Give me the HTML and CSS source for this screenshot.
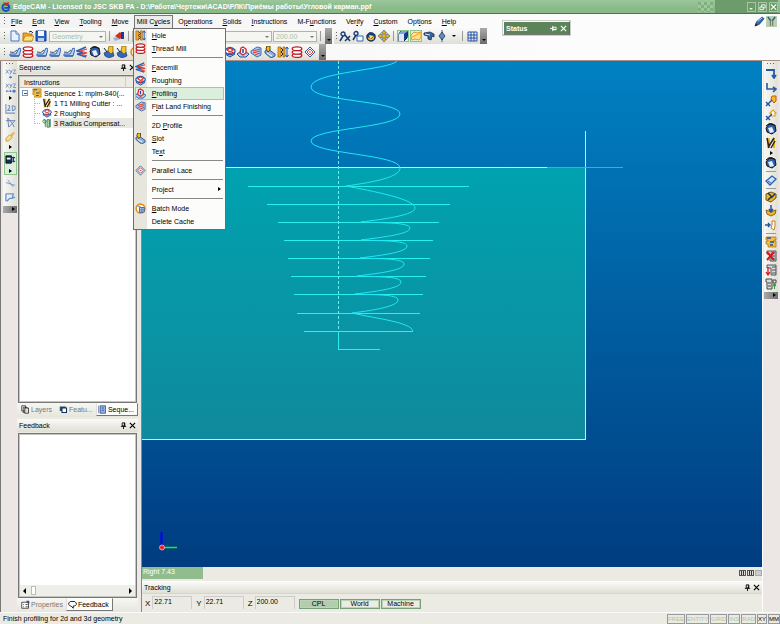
FILE: index.html
```html
<!DOCTYPE html>
<html lang="en">
<head>
<meta charset="utf-8">
<title>EdgeCAM</title>
<link rel="stylesheet" href="styles.css">
</head>
<body>
<svg class="defs" aria-hidden="true">
  <symbol id="new" viewBox="0 0 12 12"><path d="M2 1h5l3 3v7H2z" fill="#e8f2ff" stroke="#4a74c0"/><path d="M7 1v3h3" fill="#fff" stroke="#4a74c0"/></symbol>
  <symbol id="open" viewBox="0 0 12 12"><path d="M1 3h4l1 1h4v7H1z" fill="#f2a72c" stroke="#b87510"/><path d="M3 6h9l-2 5H1z" fill="#ffe27a" stroke="#b87510" stroke-width=".7"/><path d="M7 2q2-2 4 1" fill="none" stroke="#223"/></symbol>
  <symbol id="save" viewBox="0 0 12 12"><path d="M1 1h10v10H1z" fill="#2d62c8" stroke="#123c8c"/><path d="M3 1h6v5H3z" fill="#f4f7ff"/><path d="M3 8h6v3H3z" fill="#b8d0f4"/></symbol>
  <symbol id="erase" viewBox="0 0 12 12"><path d="M0 8l7-2 1 3-6 2z" fill="#9bb4dc"/><path d="M2 6l5-4 3 3-3 4z" fill="#e02818"/><path d="M8 2h3v7H8z" fill="#133c9c"/></symbol>
  <symbol id="mill" viewBox="0 0 12 12"><path d="M1 8h6l3-6 2 1-2 7H1z" fill="#b9d2f2" stroke="#3064b4"/><path d="M1 6q4 2 7-2" fill="none" stroke="#3c5684"/><path d="M2 10h8" stroke="#254c94"/></symbol>
  <symbol id="millgold" viewBox="0 0 12 12"><path d="M1 7l4-2 5 1 1 4-5 2-4-2z" fill="#3268b8" stroke="#193a7c" stroke-width=".7"/><path d="M6 0h4v6L8 8 5 5z" fill="#f5c330" stroke="#7c5a00" stroke-width=".7"/><path d="M1 2l3 4" stroke="#222"/></symbol>
  <symbol id="coil" viewBox="0 0 12 12"><g fill="#fff" stroke="#c31820" stroke-width="1.3"><ellipse cx="6" cy="9.5" rx="4.8" ry="1.9"/><ellipse cx="6" cy="6.2" rx="4.8" ry="1.9"/><ellipse cx="6" cy="2.8" rx="4.8" ry="1.9"/></g></symbol>
  <symbol id="layers" viewBox="0 0 12 12"><path d="M10 1L1 5l6 2-6 1 9 3" fill="none" stroke="#2460b8" stroke-width="1.500"/><path d="M11 3L4 5l7 2-6 1 6 2" fill="none" stroke="#e03428" stroke-width="1.100"/></symbol>
  <symbol id="rough" viewBox="0 0 12 12"><path d="M1 8l5-3 5 3-5 3z" fill="#9ec4f0" stroke="#1c50ac"/><path d="M1 4q5-5 10 0v2q-5 5-10 0z" fill="#fff" stroke="#1c50ac" stroke-width="1.2"/><path d="M3 4l3-2 3 2-3 2zM4 7l2 1 3-2" fill="none" stroke="#e02c24" stroke-width="1.2"/></symbol>
  <symbol id="profile" viewBox="0 0 12 12"><path d="M0 8l3-2h6l3 2-3 3H3z" fill="#b4cdf0" stroke="#1c50ac"/><path d="M4 2l2-1 3 2v4L6 9 3 7z" fill="#fff" stroke="#d02424" stroke-width="1.3"/><path d="M6 3v4" stroke="#1848a8" stroke-width="1.5"/></symbol>
  <symbol id="flat" viewBox="0 0 12 12"><path d="M1 5l6-4 4 1v7l-4 2-6-4z" fill="#aacaf0" stroke="#3870b8"/><path d="M3 5l7-2M3 7l7-2M5 9l5-2" stroke="#e04438" stroke-width="1.100"/></symbol>
  <symbol id="hole" viewBox="0 0 12 12"><path d="M1 1h3v10H1zM6 1h2v10H6z" fill="#efa928" stroke="#a35d08" stroke-width=".7"/><path d="M4 2l2 2-2 2 2 2-2 2" fill="none" stroke="#222"/><path d="M10 1v10M8.5 3L10 1l1.500 2M8.500 9L10 11l1.500-2" fill="none" stroke="#1c50b8"/></symbol>
  <symbol id="slot" viewBox="0 0 12 12"><path d="M1 5l3-2 7 5v2l-4 2-6-5z" fill="#8daedc" stroke="#34578e"/><path d="M3 7l5 3" stroke="#fff"/><path d="M3 0h3v4L4 6 2 3z" fill="#f5bd20" stroke="#5b4200"/></symbol>
  <symbol id="lace" viewBox="0 0 12 12"><path d="M6 1l5 5-5 5-5-5z" fill="#fff" stroke="#2c5cb0"/><path d="M6 3l3 3-3 3-3-3z" fill="none" stroke="#dc3c30"/><path d="M5 6h2" stroke="#dc3c30"/></symbol>
  <symbol id="batch" viewBox="0 0 12 12"><circle cx="6" cy="6" r="4.800" fill="#fff" stroke="#e58b18" stroke-width="1.700"/><path d="M5 5h5v5H5z" fill="#d7e6ff" stroke="#2859aa"/><path d="M5 7.500h5M7.500 5v5M3 4h3" stroke="#2859aa" stroke-width=".8"/></symbol>
  <symbol id="cube" viewBox="0 0 12 12"><path d="M2 4l2-3h7l-1 7-3 3H2z" fill="#173f83" stroke="#102848"/><path d="M2 4h5v7H2z" fill="#dbe9fb"/><path d="M2 4l2-3h7L7 4z" fill="#7ca6df"/></symbol>
  <symbol id="solid" viewBox="0 0 12 12"><path d="M1 5l3-4 6 1 1 6-4 3-5-2z" fill="#2f5fa8" stroke="#112"/><path d="M3 5l4-1 2 5-4 1z" fill="#e5effc"/><path d="M1 3q5-5 9 0" fill="none" stroke="#111"/></symbol>
  <symbol id="gold" viewBox="0 0 12 12"><path d="M1 5l3-3 3 1 4-1v5l-2 3-4-1-3 1-1-3z" fill="#ffe48a" stroke="#e79d1c"/><path d="M2 7l5-2 3-2" fill="none" stroke="#f0a030"/></symbol>
  <symbol id="zoomx" viewBox="0 0 12 12"><circle cx="4" cy="4" r="2" fill="#d7e8fb" stroke="#183a72" stroke-width="1.300"/><path d="M4 6l-3 5M6 5l5 6M11 6l-5 5" stroke="#1b3566" stroke-width="1.500"/></symbol>
  <symbol id="zoomw" viewBox="0 0 12 12"><circle cx="4" cy="3.500" r="2" fill="#d7e8fb" stroke="#183a72" stroke-width="1.300"/><path d="M4 5l-3 5" stroke="#1b3566" stroke-width="1.500"/><path d="M5 6h6v5H5z" fill="#fff" stroke="#2e67bd"/></symbol>
  <symbol id="orbit" viewBox="0 0 12 12"><circle cx="6" cy="7" r="4" fill="#efbd30" stroke="#162b58" stroke-width="1.500"/><path d="M1 6l4-4 6 3-5 4z" fill="#183d80"/><path d="M4 5l5 1-4 3z" fill="#ffe068"/></symbol>
  <symbol id="pan" viewBox="0 0 12 12"><path d="M6 0l2.500 3H7v2h2V3.500L12 6 9 8.500V7H7v2h1.500L6 12 3.500 9H5V7H3v1.500L0 6l3-2.500V5h2V3H3.500z" fill="#efb91e" stroke="#294774" stroke-width=".6"/></symbol>
  <symbol id="shade" viewBox="0 0 12 12"><path d="M1 3l6-1 4 2v3L9 6 8 10 5 9V6L1 5z" fill="#38659f" stroke="#173153" stroke-width=".8"/><path d="M2 4l5 1" stroke="#d3e3fa"/></symbol>
  <symbol id="axis" viewBox="0 0 12 12"><path d="M6 0v12" stroke="#335c94"/><path d="M6 2l3 4-3 4-3-4z" fill="#548dd0" stroke="#222" stroke-width=".7"/></symbol>
  <symbol id="grid" viewBox="0 0 12 12"><path d="M2 2h9M2 5h9M2 8h9M2 11h9M2 2v9M5 2v9M8 2v9M11 2v9" stroke="#2450a8"/></symbol>
  <symbol id="xyz1" viewBox="0 0 12 12"><path d="M1 2l3 4M4 2L1 6M5 2l1.500 3M8 2L5.500 7M9 2h2.500L9 6h3" fill="none" stroke="#7894c4"/><circle cx="6" cy="10" r="1.300" fill="#4274c6"/></symbol>
  <symbol id="xyz2" viewBox="0 0 12 12"><path d="M1 2l3 4M4 2L1 6M5 2l1.500 3M8 2L5.500 7M9 2h2.500L9 6h3M1 10h10" fill="none" stroke="#7894c4"/><path d="M2 9v2M6 9v2M9 9h2v2H9z" fill="#4274c6" stroke="#4274c6"/></symbol>
  <symbol id="flat2d" viewBox="0 0 12 12"><path d="M1 1v10h10M3 3h2v2L3 8h3M8 3v5h1l2-1V4L9 3z" fill="none" stroke="#7894c4" stroke-width="1.200"/></symbol>
  <symbol id="star" viewBox="0 0 12 12"><path d="M1 4h10L4 11 3 1l5 6M8 7l2 4" fill="none" stroke="#5f7fb4"/></symbol>
  <symbol id="brush" viewBox="0 0 12 12"><path d="M9 1l2 1-4 5-2-2z" fill="#f4ad50"/><path d="M1 8l4-4 3 3-4 4H1z" fill="#f6dc88" stroke="#d49b44"/></symbol>
  <symbol id="plane" viewBox="0 0 12 12"><path d="M1 2h6v8H1z" fill="#152e52" stroke="#111"/><path d="M2 4h4v2H2z" fill="#fff"/><path d="M7 4h4M8 8h3M9 3v6" stroke="#183d70" stroke-width="1.500"/></symbol>
  <symbol id="cross" viewBox="0 0 12 12"><path d="M1 5l10 3M3 2l6 8" stroke="#7894c4"/></symbol>
  <symbol id="flag" viewBox="0 0 12 12"><path d="M1 2h8L8 6h3M2 10l3-3h4M1 2v8" fill="none" stroke="#6d96d3" stroke-width="1.500"/></symbol>
  <symbol id="turn" viewBox="0 0 12 12"><path d="M1 3h8v7M7 8l2 3 2-3" fill="none" stroke="#2558a8" stroke-width="1.800"/></symbol>
  <symbol id="step" viewBox="0 0 12 12"><path d="M2 2v6h8M8 6l3 2-3 3" fill="none" stroke="#2558a8" stroke-width="1.600"/></symbol>
  <symbol id="toolto" viewBox="0 0 12 12"><path d="M7 1h4v5L9 8 6 4z" fill="#f7ba27" stroke="#bd5e08"/><path d="M1 7l4 4M5 7l-4 4M3 9l4-4" stroke="#1e4eaa" stroke-width="1.400"/></symbol>
  <symbol id="home" viewBox="0 0 12 12"><path d="M8 1l3 3h-1v3H6V4H5z" fill="#fff" stroke="#e79d1c" stroke-width="1.200"/><path d="M1 7l4 4M5 7l-4 4M3 9l4-4" stroke="#1e4eaa" stroke-width="1.400"/></symbol>
  <symbol id="cutter" viewBox="0 0 12 12"><path d="M2 1h3v10H2zM8 1h2v10H8z" fill="#efb51c"/><path d="M2 1l2 10M4 9l5-8M6 11l4-7" stroke="#302010" stroke-width="1.500"/></symbol>
  <symbol id="chip" viewBox="0 0 12 12"><path d="M1 7l6-5 4 3-6 6z" fill="#cfe2fa" stroke="#2b5eb3" stroke-width="1.300"/><path d="M3 7l3 2" stroke="#2b5eb3"/></symbol>
  <symbol id="stock" viewBox="0 0 12 12"><path d="M1 3l5-2 5 2v4l-5 4-5-2z" fill="#efb51c" stroke="#76500a"/><path d="M3 2l4 4M6 7l4-4M3 9l3-3" stroke="#143972" stroke-width="1.500"/></symbol>
  <symbol id="bowl" viewBox="0 0 12 12"><path d="M1 5l5 2 5-2-1 4-4 2-4-2z" fill="#f1b820" stroke="#8c6318"/><path d="M6 0v6M4 4l2 3 2-3" fill="none" stroke="#2452a0" stroke-width="1.500"/></symbol>
  <symbol id="movein" viewBox="0 0 12 12"><path d="M0 6h4M3 4l2 2-2 2" fill="none" stroke="#2452a0" stroke-width="1.300"/><path d="M7 2h3v5l-1 4-3-2 1-3z" fill="#fff" stroke="#c77b17"/></symbol>
  <symbol id="seq" viewBox="0 0 12 12"><path d="M1 1h10v3H9v1h2v6H3V8H1V5h2V4H1z" fill="#f4bd3c" stroke="#a66a13" stroke-width=".7"/><path d="M5 6h4M5 9h3M2 2h4" stroke="#284f9b" stroke-width="1.300"/></symbol>
  <symbol id="seqdel" viewBox="0 0 12 12"><path d="M2 1h9v10H5V4H2z" fill="#c9ccd2" stroke="#555"/><path d="M6 3h4M6 6h4M6 9h4" stroke="#555"/><path d="M2 2l7 8M9 2l-7 8" stroke="#dc1616" stroke-width="2"/></symbol>
  <symbol id="seqdown" viewBox="0 0 12 12"><path d="M2 1h9v10H6V4H2z" fill="#d8d9dd" stroke="#555"/><path d="M7 3h4M7 6h4M7 9h4" stroke="#555"/><path d="M3 3v7M1 8l2 3 2-3" fill="none" stroke="#cf2020" stroke-width="1.300"/></symbol>
  <symbol id="sequp" viewBox="0 0 12 12"><path d="M1 1h6v10H2V4H1z" fill="#d8d9dd" stroke="#444"/><path d="M3 5h3M3 8h3M8 2h3v3H8z" fill="none" stroke="#444"/><circle cx="9.500" cy="7" r="1.500" fill="#329642"/><path d="M9.500 7v4" stroke="#329642"/></symbol>
  <symbol id="comp" viewBox="0 0 12 12"><path d="M2 1l2 2v8M6 2h3v9H6z" fill="#a6cfae" stroke="#3c7e50"/><circle cx="3" cy="4" r="2" fill="none" stroke="#3c7e50"/><path d="M10 1v10" stroke="#3c7e50"/></symbol>
  <symbol id="copy" viewBox="0 0 12 12"><path d="M1 1h5v7H1zM3 3h5v7H3z" fill="#fff" stroke="#222"/><path d="M5 4h5v7H5z" fill="#ddd" stroke="#222"/></symbol>
  <symbol id="feature" viewBox="0 0 12 12"><path d="M1 2h8v6H1z" fill="#1e5668"/><path d="M4 4h6v6H4z" fill="#fff" stroke="#132c5c" stroke-width="1.400"/></symbol>
  <symbol id="doc" viewBox="0 0 12 12"><path d="M3 1h7v10H3z" fill="#8fb4ed" stroke="#304b80"/><path d="M1 1v10M5 4h3M5 7h3" stroke="#304b80"/></symbol>
  <symbol id="prop" viewBox="0 0 12 12"><path d="M1 3h9v8H1z" fill="#fff" stroke="#222"/><path d="M3 6h1M6 6h3M3 9h1M6 9h3" stroke="#222"/><path d="M7 1h4v4L8 4z" fill="#314f86"/></symbol>
  <symbol id="speech" viewBox="0 0 12 12"><path d="M3 2h6l2 2v2L9 8H7v3L4 8H3L1 6V4z" fill="#fff" stroke="#111" stroke-width="1.200"/></symbol>
  <symbol id="pin" viewBox="0 0 8 8"><path d="M2.500 1h3v3.500h-3zM1 5h6M4 5v3M5 1v4" fill="none" stroke="currentColor"/></symbol>
  <symbol id="close" viewBox="0 0 8 8"><path d="M1 1l6 6M7 1L1 7" stroke="currentColor" stroke-width="1.300"/></symbol>
  <symbol id="pencil" viewBox="0 0 12 12"><path d="M1 11l2-5 6-5 2 2-5 6z" fill="#3268b8" stroke="#172d5c" stroke-width=".7"/><path d="M4 6l5-4" stroke="#afd4ff"/><path d="M1 11l1-3 2 2z" fill="#222"/></symbol>
  <symbol id="tools" viewBox="0 0 12 12"><path d="M0 0h12v12H0z" fill="#b5d1b4"/><path d="M2 1l3 4v6M10 1L7 5v6" fill="none" stroke="#34558b" stroke-width="1.600"/><path d="M5 5h2v6H5z" fill="#f5c330"/></symbol>
  <symbol id="logo" viewBox="0 0 12 12"><path d="M10 9q-6 4-8-1-1-6 4-5 4 0 4 4H4" fill="none" stroke="#1749c8" stroke-width="2.200"/><path d="M2 0q3 2 8 0L8 4H5z" fill="#e02418"/></symbol>
</svg>

<div class="app">
  <header class="titlebar">
    <svg class="icon"><use href="#logo"/></svg>
    <h1>EdgeCAM - Licensed to JSC SKB PA - D:\Работа\Чертежи\ACAD\РЛК\Приёмы работы\Угловой карман.ppf</h1>
    <span class="pixels"></span>
    <div class="window-buttons">
      <button aria-label="Minimize"><svg viewBox="0 0 8 8"><path d="M2 6h3" stroke="#fff" stroke-width="1.500"/></svg></button>
      <button aria-label="Restore"><svg viewBox="0 0 8 8"><path d="M1 4h4v3H1zM3 4V1.500h4V5H5" fill="none" stroke="#fff"/></svg></button>
      <button aria-label="Close"><svg><use href="#close"/></svg></button>
    </div>
  </header>

  <div class="bars">
    <nav class="menubar">
      <i class="grip"></i>
      <button><u>F</u>ile</button><button><u>E</u>dit</button><button><u>V</u>iew</button><button><u>T</u>ooling</button><button><u>M</u>ove</button>
      <div class="menu-holder">
        <button class="opened" aria-expanded="true">Mill C<u>y</u>cles</button>
        <div class="dropdown" role="menu">
          <button role="menuitem"><svg class="icon"><use href="#hole"/></svg><span><u>H</u>ole</span></button>
          <button role="menuitem"><svg class="icon"><use href="#coil"/></svg><span><u>T</u>hread Mill</span></button>
          <hr>
          <button role="menuitem"><svg class="icon"><use href="#layers"/></svg><span><u>F</u>acemill</span></button>
          <button role="menuitem"><svg class="icon"><use href="#rough"/></svg><span>Rou<u>g</u>hing</span></button>
          <button role="menuitem" class="hot"><svg class="icon"><use href="#profile"/></svg><span><u>P</u>rofiling</span></button>
          <button role="menuitem"><svg class="icon"><use href="#flat"/></svg><span>F<u>l</u>at Land Finishing</span></button>
          <hr>
          <button role="menuitem"><span>2D <u>P</u>rofile</span></button>
          <button role="menuitem"><svg class="icon"><use href="#slot"/></svg><span><u>S</u>lot</span></button>
          <button role="menuitem"><span>Te<u>x</u>t</span></button>
          <hr>
          <button role="menuitem"><svg class="icon"><use href="#lace"/></svg><span>Parallel Lace</span></button>
          <hr>
          <button role="menuitem"><span>Pro<u>j</u>ect</span><i class="arrow-right"></i></button>
          <hr>
          <button role="menuitem"><svg class="icon"><use href="#batch"/></svg><span><u>B</u>atch Mode</span></button>
          <button role="menuitem"><span>Delete Cache</span></button>
        </div>
      </div>
      <button>O<u>p</u>erations</button><button><u>S</u>olids</button><button><u>I</u>nstructions</button><button>M-F<u>u</u>nctions</button><button>Ver<u>i</u>fy</button><button><u>C</u>ustom</button><button>Opt<u>i</u>ons</button><button><u>H</u>elp</button>
      <div class="corner">
        <button aria-label="Edit"><svg class="icon"><use href="#pencil"/></svg></button>
        <button aria-label="Tools"><svg class="icon"><use href="#tools"/></svg></button>
      </div>
    </nav>

    <div class="toolrow">
      <div class="toolbar standard">
        <i class="grip"></i>
        <button aria-label="New"><svg class="icon"><use href="#new"/></svg></button>
        <button aria-label="Open"><svg class="icon"><use href="#open"/></svg></button>
        <button aria-label="Save"><svg class="icon"><use href="#save"/></svg></button>
        <span class="combo wide"><select aria-label="Layer" disabled><option>Geometry</option></select></span>
        <i class="sep"></i>
        <button aria-label="Erase"><svg class="icon"><use href="#erase"/></svg></button>
        <i class="sep"></i>
        <span class="combo stretch"><select aria-label="Plane" disabled><option></option></select></span>
        <span class="combo"><select aria-label="Level" disabled><option>200.00</option></select></span>
        <i class="sep"></i>
        <i class="cap"></i>
      </div>
      <div class="toolbar view">
        <i class="grip"></i>
        <button aria-label="Zoom extents"><svg class="icon"><use href="#zoomx"/></svg></button>
        <button aria-label="Zoom window"><svg class="icon"><use href="#zoomw"/></svg></button>
        <button aria-label="Rotate"><svg class="icon"><use href="#orbit"/></svg></button>
        <button aria-label="Pan"><svg class="icon"><use href="#pan"/></svg></button>
        <i class="sep"></i>
        <button class="on" aria-label="Rendered"><svg class="icon"><use href="#cube"/></svg></button>
        <button class="on" aria-label="Stock"><svg class="icon"><use href="#gold"/></svg></button>
        <button aria-label="Shade"><svg class="icon"><use href="#shade"/></svg></button>
        <button aria-label="Axis"><svg class="icon"><use href="#axis"/></svg></button>
        <i class="arrow-down"></i>
        <i class="sep"></i>
        <button aria-label="Grid"><svg class="icon"><use href="#grid"/></svg></button>
        <i class="cap"></i>
      </div>
    </div>

    <div class="toolrow">
      <div class="toolbar cycles">
        <i class="grip"></i>
        <div class="run">
          <button aria-label="Mill"><svg class="icon"><use href="#mill"/></svg></button>
          <button aria-label="Thread"><svg class="icon"><use href="#coil"/></svg></button>
          <button aria-label="Face"><svg class="icon"><use href="#mill"/></svg></button>
          <button aria-label="Side"><svg class="icon"><use href="#mill"/></svg></button>
          <button aria-label="Chamfer"><svg class="icon"><use href="#mill"/></svg></button>
          <button aria-label="Flat"><svg class="icon"><use href="#layers"/></svg></button>
          <button aria-label="Solid"><svg class="icon"><use href="#solid"/></svg></button>
          <button aria-label="Cutter"><svg class="icon"><use href="#millgold"/></svg></button>
          <button aria-label="Drill"><svg class="icon"><use href="#millgold"/></svg></button>
          <button aria-label="Batch"><svg class="icon"><use href="#batch"/></svg></button>
          <button aria-label="Hole"><svg class="icon"><use href="#hole"/></svg></button>
          <button aria-label="Coil"><svg class="icon"><use href="#coil"/></svg></button>
          <button aria-label="Layers"><svg class="icon"><use href="#layers"/></svg></button>
          <button aria-label="Mill stock"><svg class="icon"><use href="#mill"/></svg></button>
          <button aria-label="Slotting"><svg class="icon"><use href="#slot"/></svg></button>
          <button aria-label="Lacing"><svg class="icon"><use href="#lace"/></svg></button>
          <button aria-label="Roughing"><svg class="icon"><use href="#rough"/></svg></button>
          <button aria-label="Profiling"><svg class="icon"><use href="#profile"/></svg></button>
          <button aria-label="Flat land"><svg class="icon"><use href="#flat"/></svg></button>
          <button aria-label="Slot"><svg class="icon"><use href="#slot"/></svg></button>
          <button aria-label="Hole cycle"><svg class="icon"><use href="#hole"/></svg></button>
          <button aria-label="Thread mill"><svg class="icon"><use href="#coil"/></svg></button>
          <button aria-label="Parallel lace"><svg class="icon"><use href="#lace"/></svg></button>
        </div>
        <i class="cap"></i>
      </div>
    </div>
    <div class="status-palette"><b>Status</b><svg class="mini side"><use href="#pin"/></svg><svg class="mini"><use href="#close"/></svg></div>
  </div>

  <main class="workspace">
    <aside class="rail left">
      <div class="railbar">
        <i class="grip-h"></i>
        <button aria-label="Point"><svg class="icon"><use href="#xyz1"/></svg></button>
        <button aria-label="Points"><svg class="icon"><use href="#xyz2"/></svg></button>
        <i class="arrow-right"></i>
        <button aria-label="2D"><svg class="icon"><use href="#flat2d"/></svg></button>
        <button aria-label="Polar"><svg class="icon"><use href="#star"/></svg></button>
        <button aria-label="Brush"><svg class="icon"><use href="#brush"/></svg></button>
        <i class="arrow-right"></i>
        <div class="chosen"><button aria-label="Plane"><svg class="icon"><use href="#plane"/></svg></button><i class="arrow-right"></i></div>
        <button aria-label="Cross"><svg class="icon"><use href="#cross"/></svg></button>
        <button aria-label="Flag"><svg class="icon"><use href="#flag"/></svg></button>
        <i class="cap-h"></i>
      </div>
    </aside>

    <aside class="docks">
      <section class="dock sequence">
        <header class="dock-head"><h2>Sequence</h2><svg class="mini"><use href="#pin"/></svg><svg class="mini"><use href="#close"/></svg></header>
        <div class="box">
          <div class="column-head"><span>Instructions</span><span></span></div>
          <ul class="tree">
            <li class="root"><i class="minus"></i><svg class="icon"><use href="#seq"/></svg><span>Sequence 1: mplm-840(...</span></li>
            <li><svg class="icon"><use href="#cutter"/></svg><span>1 T1 Milling Cutter : ...</span></li>
            <li><svg class="icon"><use href="#rough"/></svg><span>2 Roughing</span></li>
            <li class="current"><svg class="icon"><use href="#comp"/></svg><span>3 Radius Compensat...</span></li>
          </ul>
        </div>
        <div class="tabs" role="tablist">
          <button role="tab"><svg class="icon"><use href="#copy"/></svg>Layers</button>
          <button role="tab"><svg class="icon"><use href="#feature"/></svg>Featu...</button>
          <button role="tab" class="active" aria-selected="true"><svg class="icon"><use href="#doc"/></svg>Seque...</button>
        </div>
      </section>
      <section class="dock feedback">
        <header class="dock-head"><h2>Feedback</h2><svg class="mini"><use href="#pin"/></svg><svg class="mini"><use href="#close"/></svg></header>
        <div class="box"><div class="scrollbar"><i class="arrow-left"></i><i class="thumb"></i><i class="arrow-right"></i></div></div>
        <div class="tabs" role="tablist">
          <button role="tab"><svg class="icon"><use href="#prop"/></svg>Properties</button>
          <button role="tab" class="active" aria-selected="true"><svg class="icon"><use href="#speech"/></svg>Feedback</button>
        </div>
      </section>
    </aside>

    <div class="stage">
      <svg class="viewport" viewBox="142 61 620 506" preserveAspectRatio="none" role="img" aria-label="Toolpath view">
        <defs>
          <linearGradient id="sky" x1="0" y1="0" x2="0" y2="1"><stop offset="0" stop-color="#0081c2"/><stop offset="1" stop-color="#003c80"/></linearGradient>
          <linearGradient id="part" x1="0" y1="0" x2="0" y2="1"><stop offset="0" stop-color="#00a2b0"/><stop offset="1" stop-color="#108a9c"/></linearGradient>
        </defs>
        <path d="M142 61h620v506H142z" fill="url(#sky)"/>
        <path d="M142 168h443v271H142z" fill="url(#part)"/>
        <g fill="none" shape-rendering="crispEdges">
          <path d="M142 167.500h405M585.500 131v308" stroke="#b4f0f4"/>
          <path d="M547 167.500h76" stroke="#19c8b4"/>
          <path d="M142 439.500h444" stroke="#9cfff0"/>
          <path d="M248 186.500h221M267 204.500h183M278 222.500h161M284 240.500h149M288 258.500h142M291 276.500h135M294 294.500h129M297 313.500h123M304 331.500h109" stroke="#28f0ee"/>
          <path d="M338.500 61v270" stroke="#6cf0f4" stroke-dasharray="3 2"/>
          <path d="M338.500 331v18.500H380" stroke="#28f0ee"/>
        </g>
        <path fill="none" stroke="#20e8f4" d="M397 61C390 70 311 72 311 87S400 100 400 114 311 128 311 141 400 154 400 168C400 177 375 182 346 186C372 191 415 199 415 208C415 215 385 219 361 222C378 223 410 222 410 228C410 234 384 237 361 240C378 241 407 240 407 246C407 252 384 255 360 258C377 259 404 258 404 264C404 270 382 273 357 276C375 277 401 276 401 282C401 288 380 291 355 294C373 295 398 294 398 300C398 306 376 310 352 313C378 319 410 322 413 331"/>
        <path d="M161.500 532v14" stroke="#0000ff" stroke-width="2"/><path d="M163 547.500h14" stroke="#00ff20" stroke-width="1.500"/><circle cx="162" cy="547.500" r="2.500" fill="#f02020" stroke="#ffd0d0" stroke-width=".7"/>
      </svg>
      <div class="viewbar"><span class="viewname">Right 7.43</span><span class="viewbuttons"><i></i><i></i><i class="off"></i></span></div>
      <header class="dock-head tracking"><h2>Tracking</h2><svg class="mini"><use href="#pin"/></svg><svg class="mini"><use href="#close"/></svg></header>
      <form class="coords">
        <label for="cx">X</label><input id="cx" value="22.71">
        <label for="cy">Y</label><input id="cy" value="22.71">
        <label for="cz">Z</label><input id="cz" value="200.00">
        <div class="frames"><button type="button" class="pressed">CPL</button><button type="button">World</button><button type="button">Machine</button></div>
      </form>
    </div>

    <aside class="rail right">
      <div class="railbar">
        <i class="grip-h"></i>
        <button aria-label="Rapid"><svg class="icon"><use href="#turn"/></svg></button>
        <button aria-label="Feed"><svg class="icon"><use href="#step"/></svg></button>
        <button aria-label="Tool change"><svg class="icon"><use href="#toolto"/></svg></button>
        <button aria-label="Home"><svg class="icon"><use href="#home"/></svg></button>
        <button aria-label="Solid"><svg class="icon"><use href="#solid"/></svg></button>
        <button aria-label="Cutter"><svg class="icon"><use href="#cutter"/></svg></button>
        <i class="arrow-right"></i>
        <button aria-label="Model"><svg class="icon"><use href="#solid"/></svg></button>
        <hr>
        <button aria-label="Chip"><svg class="icon"><use href="#chip"/></svg></button>
        <hr>
        <button aria-label="Stock"><svg class="icon"><use href="#stock"/></svg></button>
        <button aria-label="Fixture"><svg class="icon"><use href="#bowl"/></svg></button>
        <button aria-label="Move in"><svg class="icon"><use href="#movein"/></svg></button>
        <hr>
        <button aria-label="Sequence"><svg class="icon"><use href="#seq"/></svg></button>
        <button aria-label="Delete sequence"><svg class="icon"><use href="#seqdel"/></svg></button>
        <button aria-label="Move down"><svg class="icon"><use href="#seqdown"/></svg></button>
        <button aria-label="Move up"><svg class="icon"><use href="#sequp"/></svg></button>
        <i class="cap-h"></i>
      </div>
    </aside>
  </main>

  <footer class="statusbar">
    <span class="hint">Finish profiling for 2d and 3d geometry</span>
    <span class="cell">FREE</span><span class="cell">ENTITY</span><span class="cell">GRID</span><span class="cell">INS</span><span class="cell">RAD</span><span class="cell lit">XY</span><span class="cell lit">MM</span>
  </footer>
</div>
</body>
</html>
```
FILE: styles.css
```css
* { box-sizing: border-box; }
body { margin: 0; background: #ece9e6; color: #000; font: 7px/9px "Liberation Sans", Arial, sans-serif; }
button { margin: 0; padding: 0; border: 0; background: none; color: inherit; font: inherit; white-space: nowrap; }
h1, h2 { margin: 0; font: inherit; }
svg { display: block; }
.defs { position: absolute; width: 0; height: 0; }
.icon { width: 12px; height: 12px; flex: none; }
.mini { width: 7px; height: 7px; flex: none; }
.side { transform: rotate(90deg); }
.app { display: flex; flex-direction: column; height: 100vh; overflow: hidden; }

.titlebar { display: flex; align-items: center; gap: 2px; height: 14px; padding: 0 2px 0 1px; background: linear-gradient(#9bc79b, #8aba8a 60%, #8aba8a); border-bottom: 1px solid #52704f; color: #fff; }
.titlebar .icon { width: 10px; height: 10px; }
.titlebar h1 { flex: 1; font-size: 7px; font-weight: bold; white-space: nowrap; }
.pixels { width: 15px; height: 10px; background: conic-gradient(#9cc89a 25%, #80b07f 0 50%, #9cc89a 0 75%, #80b07f 0) 0 0 / 6px 6px; }
.window-buttons { display: flex; align-items: center; gap: 2px; align-self: stretch; padding-left: 32px; background: #6c9c6b; }
.window-buttons button { width: 9px; height: 10px; border: 1px solid #a5c7a4; }
.window-buttons svg { width: 7px; height: 8px; }

.bars { position: relative; background: linear-gradient(90deg, #f3f3f3, #fcfcfc 70%); height: 47px; flex: none; border-bottom: 1px solid #aa8f84; }
.menubar { display: flex; align-items: center; height: 14px; padding-left: 4px; }
.menubar > button, .opened { height: 13px; padding: 0 5px; }
.menubar > .grip { margin-right: 1px; }
.grip { width: 1px; height: 9px; flex: none; background: repeating-linear-gradient(#666 0 1px, transparent 1px 3px); }
.menu-holder { position: relative; }
.opened { padding: 0 2px; border: 1px solid #777; border-bottom: 0; background: #ececea; }
.corner { display: flex; gap: 1px; margin-left: auto; padding-right: 3px; }
.corner .icon { width: 11px; height: 11px; }

.dropdown { position: absolute; z-index: 2; left: -1px; top: 13px; width: 93px; padding: 0 1px 1px; border: 1px solid #6c6c6c; background: linear-gradient(90deg, #e6e6dc 13px, #fcfcfa 13px); }
.dropdown button { display: flex; align-items: center; width: 100%; height: 13px; text-align: left; }
.dropdown .icon { width: 11px; height: 11px; }
.dropdown span { flex: 1; padding-left: 17px; }
.dropdown .icon + span { padding-left: 6px; }
.dropdown hr { height: 1px; margin: 2px 1px 3px 17px; border: 0; background: #888; }
.dropdown .hot { background: #dcefdc; outline: 1px solid #a4c8a0; outline-offset: -1px; }
.dropdown .arrow-right { margin-right: 3px; }

.toolrow { display: flex; height: 16px; }
.toolbar { display: flex; align-items: center; gap: 1px; padding-left: 4px; background: linear-gradient(#fafaf8, #dfdfd8); }
.standard { width: 332px; }
.standard > .grip { margin-right: 3px; }
.view { margin-left: 2px; padding-left: 2px; }
.cycles { width: 326px; }
.view > .grip { margin-right: 1px; }
.run { display: flex; flex: 1; justify-content: space-between; padding: 0 1px 0 3px; }
.sep { width: 1px; height: 10px; margin: 0 2px; flex: none; background: #999; }
.cap { align-self: stretch; width: 7px; margin-left: 1px; flex: none; background: linear-gradient(#aaa, #6d6d6d); }
.cap::after { content: ""; display: block; margin: 11px 2px 0; border: 2px solid transparent; border-top-color: #000; }
.on { outline: 1px solid #8cc48c; outline-offset: -1px; background: #dcefdc; }
.combo { position: relative; width: 44px; height: 11px; flex: none; }
.combo.wide { width: 57px; margin-left: 1px; }
.combo.stretch { flex: 1; width: auto; }
.combo select { appearance: none; display: block; width: 100%; height: 11px; padding: 0 2px; border: 1px solid #b4b4ac; border-radius: 0; background: #f5f5f1; color: #a9bfa6; font: 7px/9px "Liberation Sans", Arial, sans-serif; opacity: 1; }
.combo::after { content: ""; position: absolute; right: 3px; top: 5px; border: 2px solid transparent; border-top-color: #777; }
.arrow-right { width: 0; height: 0; flex: none; border: 2px solid transparent; border-left: 3px solid #000; border-right: 0; }
.arrow-left { width: 0; height: 0; flex: none; border: 3px solid transparent; border-right: 3px solid #000; border-left: 0; }
.scrollbar .arrow-right { border-width: 3px 0 3px 3px; }
.arrow-down { margin: 2px 3px 0; border: 2px solid transparent; border-top-color: #000; }
.status-palette { position: absolute; left: 502px; top: 6px; display: flex; align-items: center; gap: 3px; width: 69px; height: 16px; padding: 0 2px; background: #5b8559; border: 2px solid #fff; border-right-color: #666; border-bottom-color: #777; outline: 1px solid #ccc; outline-offset: -1px; color: #fff; }
.status-palette b { flex: 1; }

.workspace { display: flex; flex: 1; min-height: 0; }
.rail { flex: none; background: #ece7e5; }
.left { width: 17px; padding: 0 0 0 2px; border-left: 1px solid #777; }
.right { width: 18px; padding: 0 2px 0 1px; border-left: 1px solid #fff; }
.railbar { display: flex; flex-direction: column; align-items: center; gap: 2px; padding-top: 2px; background: linear-gradient(90deg, #f8f8f5, #e0e0d8); }
.left .railbar { gap: 3px; }
.left .icon { width: 11px; height: 11px; }
.railbar hr { width: 10px; height: 1px; margin: 0; border: 0; background: #999; }
.grip-h { width: 9px; height: 1px; margin-bottom: 1px; background: repeating-linear-gradient(90deg, #666 0 1px, transparent 1px 3px); }
.chosen { display: flex; flex-direction: column; align-items: center; gap: 4px; width: 13px; height: 23px; padding-top: 1px; border: 1px solid #8cc48c; background: #dcefdc; }
.cap-h { align-self: stretch; height: 7px; background: linear-gradient(90deg, #aaa, #6d6d6d); }
.cap-h::after { content: ""; display: block; width: 0; margin: 1px 2px 0 auto; border: 2px solid transparent; border-left: 3px solid #000; border-right: 0; }

.docks { display: flex; flex-direction: column; width: 121px; flex: none; background: #ebebe4; }
.dock { display: flex; flex-direction: column; }
.sequence { flex: 358; }
.sequence .tabs { margin-bottom: 2px; }
.feedback { flex: 193; }
.dock-head { display: flex; align-items: center; gap: 2px; height: 13px; flex: none; padding: 0 2px; background: linear-gradient(#fafaf8, #dfdfd6); }
.dock-head h2 { flex: 1; }
.box { display: flex; flex-direction: column; flex: 1; margin: 1px 1px 0; border: 1px solid #777; outline: 1px solid #c4c4c0; outline-offset: -2px; padding: 1px; background: #fff; }
.column-head { display: grid; grid-template-columns: 1fr 10px; height: 11px; padding-left: 4px; line-height: 11px; background: #ecece4; border-bottom: 1px solid #bbb; }
.column-head span + span { border-left: 1px solid #ccc; }
.tree { margin: 0; padding: 0 0 0 2px; list-style: none; }
.tree li { display: flex; align-items: center; gap: 1px; height: 10px; margin-left: 20px; white-space: nowrap; position: relative; }
.tree li span { padding: 0 1px; }
.tree .icon { width: 10px; height: 10px; }
.tree .root { margin-left: 0; gap: 1px; }
.tree li:not(.root)::before { content: ""; position: absolute; left: -8px; top: -5px; width: 5px; height: 10px; border: 1px dotted #bbb; border-width: 0 0 1px 1px; }
.minus { width: 6px; height: 6px; margin-right: 3px; border: 1px solid #7897c4; background: linear-gradient(#456, #456) center / 3px 1px no-repeat #fff; }
.current { background: linear-gradient(#e8e8e2, #e8e8e2) 11px 0 no-repeat; }
.tabs { display: flex; height: 14px; flex: none; padding-left: 3px; background: linear-gradient(#f7f7f3, #e6e6dd); color: #777; }
.tabs button { display: flex; align-items: center; gap: 1px; padding: 0 3px 0 1px; margin-bottom: 1px; }
.tabs .icon { width: 9px; height: 9px; }
.sequence .tabs button { flex: 1; }
.tabs .active { background: #fcfcfa; border: 1px solid #777; border-top-color: #fcfcfa; border-left-color: #ddd; color: #000; }
.scrollbar { display: flex; align-items: center; height: 11px; margin-top: auto; padding: 0 3px; background: #efefe9; }
.thumb { width: 5px; height: 9px; margin: 0 auto 0 5px; border: 1px solid #bbb; background: #fff; }

.stage { display: flex; flex-direction: column; flex: 1; min-width: 0; margin-left: 3px; border-left: 1px solid #888; background: #ebebe4; }
.viewport { width: 100%; flex: 1; min-height: 0; }
.viewbar { display: flex; justify-content: space-between; height: 12px; flex: none; }
.viewname { width: 61px; padding-left: 1px; background: #90bc8e; color: #fff; line-height: 9px; }
.viewbuttons { display: flex; gap: 1px; padding-top: 3px; }
.viewbuttons i { width: 7px; height: 6px; border: 1px solid #555; background: linear-gradient(90deg, #ddd 1px, #333 1px 2px, #ddd 2px 3px, #333 3px 4px, #ddd 4px); }
.viewbuttons .off { border-color: #aaa; background: #ccc; }
.tracking { margin-top: 2px; border-top: 1px solid #fff; border-bottom: 1px solid #d6d6d0; }
.coords { display: flex; height: 18px; flex: none; padding-left: 3px; margin-bottom: 0; }
.coords label { padding: 5px 2px 0 0; font-size: 8px; }
.coords input { width: 40px; height: 13px; margin: 2px 4px 0 0; padding: 0 0 3px 1px; border: 1px solid #ccc; border-width: 1px 1px 0; border-radius: 0; background: none; font: 7px/9px "Liberation Sans", Arial, sans-serif; }
.coords input:focus { outline: none; }
.frames { display: flex; gap: 1px; padding-top: 5px; }
.frames button { width: 40px; height: 10px; border: 1px solid #78a078; outline: 1px solid #b9d4b7; outline-offset: -2px; background: #ecece4; line-height: 8px; }
.frames .pressed { background: #b2ccae; }

.statusbar { display: flex; align-items: center; gap: 1px; height: 12px; flex: none; padding: 0 0 0 3px; background: #ebebe4; border-top: 1px solid #fafafa; }
.hint { flex: 1; }
.cell { height: 10px; border: 1px solid #999; color: #a9c4a5; font-size: 6px; line-height: 9px; }
.lit { color: #000; }
```
